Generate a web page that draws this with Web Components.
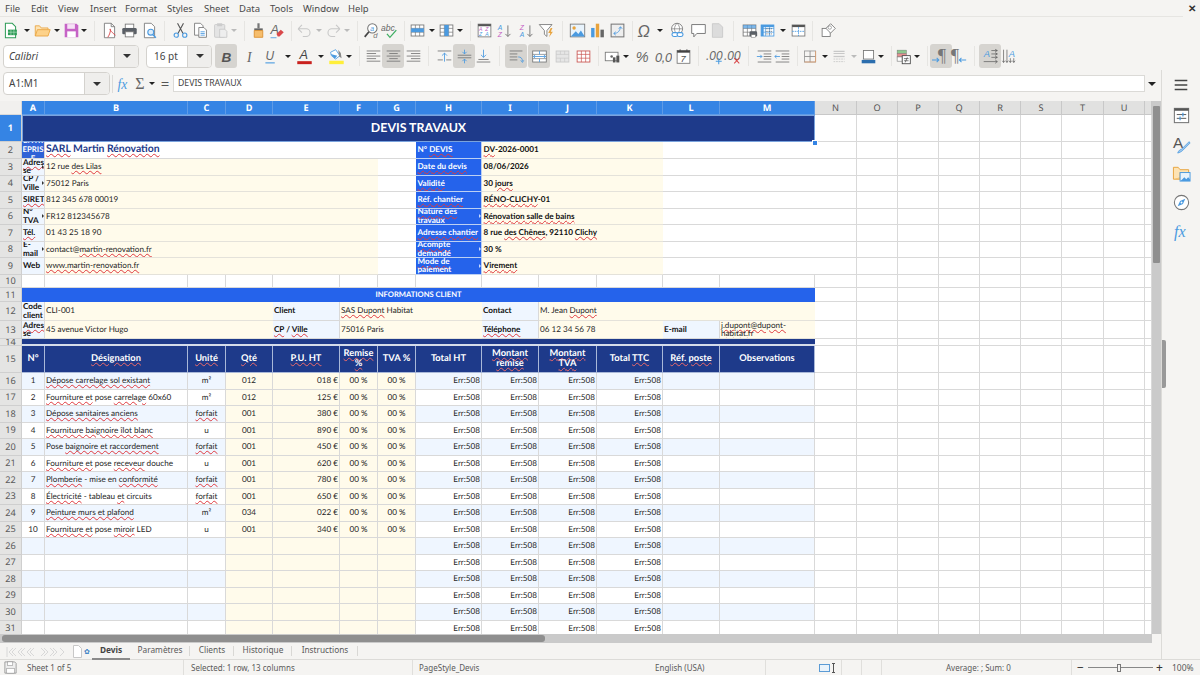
<!DOCTYPE html>
<html lang="fr">
<head>
<meta charset="utf-8">
<title>Devis</title>
<style>
  html, body { margin: 0; padding: 0; height: 100%; overflow: hidden; background: #f5f4f2; }
</style>
</head>
<body>
<lo-app>
  <lo-menubar></lo-menubar>
  <lo-toolbar height="27" start="1" items="new@12 dd@27 open@42 dd@57 save@71 dd@86 sep@93 pdf@107 print@129 preview@152 sep@164 cut@178 copy@200 paste@222 ddoff@236 sep@243 clone@256 clear@279 sep@292 undo@304 ddoff@319 redo@334 ddoff@348 sep@357 find@369 spell@391 sep@405 rowtbl@417 dd@432 coltbl@447 dd@461 sep@469 sort@482 sortasc@504 sortdesc@526 filter@548 sep@562 image@576 chart@597 pivot@619 sep@633 omega@645 dd@660 link@676 comment@698 headers@720 sep@733 printarea@747 freeze@769 dd@783 split@798 sep@813 shapes@826"></lo-toolbar>
  <lo-toolbar height="26" start="212" items="bold@229!  italic@251 under@272 dd@286 fcolor@306 dd@321 bgcolor@336 dd@351 sep@358 aleft@371 acenter@393! aright@415 sep@429 vtop@442 vcenter@464! vbottom@486 sep@499 wrap@513! merge@540! merge2@563 unmerge@585 sep@599 currency@612 dd@626 percent@641 number@664 date@685 sep@699 adddec@712 deldec@735 sep@749 indent@762 outdent@784 sep@798 borders@809 dd@825 bstyle@839 ddoff@854 bcolor@868 dd@883 sep@890 cond@903 dd@918 sep@927 ltr@938! rtl@960 sep@975 horiz@988! vert@1009">
    <lo-combo width="136" btn="23" italic>Calibri</lo-combo>
    <lo-combo width="66" btn="23" gap="7">16 pt</lo-combo>
  </lo-toolbar>
  <lo-formulabar></lo-formulabar>
  <lo-workspace>
    <lo-sheet></lo-sheet>
    <lo-sidebar></lo-sidebar>
  </lo-workspace>
  <lo-statusbar></lo-statusbar>
</lo-app>

<script>
const GR = '#757575', BL = '#4a9ae0', LG = '#c8c8c8', OR = '#e8a33d', RD = '#d9484a';
const lines = (ys, x1, x2, c = GR) => ys.map(y => `<path d="M${x1} ${y}H${x2}" stroke="${c}" stroke-width="1"/>`).join('');
const tbl = (c = GR) => `<rect x="2.500" y="3.500" width="15" height="13" fill="#fff" stroke="${c}"/><path d="M2.500 7.500h15M2.500 12h15M7.500 3.500v13M12.500 3.500v13" stroke="${c}" stroke-width=".8" fill="none"/>`;
const t = (x, y, s, txt, c = GR, extra = '') => `<text x="${x}" y="${y}" font-size="${s}" fill="${c}" font-family="Liberation Sans, sans-serif" ${extra}>${txt}</text>`;
const ICONS = {
  new: `<path d="M4 1.500h8l4 4v13H4z" fill="#fff" stroke="#2e9c57" stroke-width="1.200"/><rect x="7" y="9" width="10.500" height="6.500" fill="#2e9c57"/><path d="M10.500 9v6.500M14 9v6.500M7 12h10.500" stroke="#bfe6cc" stroke-width=".7"/>`,
  open: `<path d="M1.500 16.500V4.500h5l2 2.500h8v2" fill="#fde3b4" stroke="${OR}"/><path d="M1.500 16.500l2.500-7.500h15l-2.500 7.500z" fill="#fdd28a" stroke="${OR}"/>`,
  save: `<path d="M2 2h14l2 2v14H2z" fill="#c663c6"/><rect x="5" y="2.500" width="9" height="5.500" fill="#f6e2f6"/><rect x="5" y="11" width="10" height="7" fill="#fff"/>`,
  pdf: `<path d="M4 1.500h8l4 4v13H4z" fill="#fff" stroke="${GR}"/><path d="M12 1.500v4h4" fill="none" stroke="${GR}"/><path d="M8 18c2-3 3.500-7 3-9.500-.7-1.500-1.500 1.500 6 7" fill="none" stroke="${RD}" stroke-width="1.100"/>`,
  print: `<rect x="5" y="2.500" width="10" height="5" fill="#fff" stroke="${GR}"/><rect x="1.500" y="7" width="17" height="7.500" rx="1.500" fill="#5a5f66"/><rect x="5" y="11.500" width="10" height="6" fill="#fff" stroke="${GR}"/>`,
  preview: `<path d="M4 1.500h8l4 4v13H4z" fill="#fff" stroke="${GR}"/><circle cx="11.500" cy="12" r="3.500" fill="#dcecfa" stroke="${BL}" stroke-width="1.300"/><path d="M14 15l3.500 3.500" stroke="${BL}" stroke-width="1.600"/>`,
  cut: `<path d="M6.500 1.500l6.500 12M13.500 1.500L7 13.500" stroke="#555" stroke-width="1.300"/><circle cx="5" cy="15.500" r="2.500" fill="none" stroke="${BL}" stroke-width="1.300"/><circle cx="15" cy="15.500" r="2.500" fill="none" stroke="${BL}" stroke-width="1.300"/>`,
  copy: `<path d="M3 1.500h7l3 3v11H3z" fill="#fff" stroke="${GR}"/><path d="M8 6.500h6l3 3v8.500H8z" fill="#fff" stroke="${GR}"/>${lines([11.500, 13.500, 15.500], 10, 15, BL)}`,
  paste: `<rect x="3" y="3" width="12" height="15" rx="1" fill="#e4e4e4" stroke="${LG}"/><rect x="6" y="1.500" width="6" height="3.500" fill="#ccc"/><path d="M9 8.500h6l2.500 2.500v7H9z" fill="#eee" stroke="${LG}"/>`,
  clone: `<rect x="8.700" y="1.500" width="2.600" height="6" fill="#777"/><rect x="5" y="7.500" width="10" height="2.500" fill="#666"/><path d="M5 10h10v8H5z" fill="#f6bd6c" stroke="#d98c2c"/>`,
  clear: `${t(3, 14, 15, 'A', '#666')}<path d="M10 14l5-5 3.500 3-5 5h-2z" fill="${RD}"/><path d="M3 18.500h7" stroke="${BL}"/>`,
  undo: `<path d="M2.500 8H12a4.500 4.500 0 0 1 0 9H8M2.500 8L7 3.500M2.500 8L7 12.500" fill="none" stroke="${LG}" stroke-width="1.300"/>`,
  redo: `<path d="M17.500 8H8a4.500 4.500 0 0 0 0 9h4M17.500 8L13 3.500M17.500 8L13 12.500" fill="none" stroke="${LG}" stroke-width="1.300"/>`,
  find: `<circle cx="11" cy="7.500" r="5.500" fill="#fff" stroke="${GR}" stroke-width="1.200"/><path d="M7 11.500l-5 6" stroke="#444" stroke-width="2"/>${t(8.500, 10.500, 8, 'a', BL)}${t(12, 19, 9, 'd', GR)}`,
  spell: `${t(0, 10, 10, 'abc', '#666')}<path d="M7 14l3.500 4L18 9.500" fill="none" stroke="#3fae62" stroke-width="1.500"/>`,
  rowtbl: `${tbl()}<rect x="2.500" y="7.500" width="15" height="4.500" fill="${BL}"/>`,
  coltbl: `${tbl()}<rect x="7.500" y="3.500" width="5" height="13" fill="${BL}"/>`,
  sort: `<rect x="2.500" y="2.500" width="15" height="15" fill="#fff" stroke="${GR}"/><rect x="2.500" y="2.500" width="15" height="2.500" fill="#555"/>${t(3.500, 10.500, 6, 'A', '#c45cc4')}${t(3.500, 16.500, 6, 'Z', BL)}${t(11, 10.500, 6, 'Z', '#c45cc4')}${t(11, 16.500, 6, 'A', BL)}`,
  sortasc: `${t(2, 9, 8, 'A', BL)}${t(2, 18, 8, 'Z', '#c45cc4')}<path d="M14 4v13M11 14l3 3 3-3" fill="none" stroke="${GR}" stroke-width="1.100"/>`,
  sortdesc: `${t(2, 9, 8, 'Z', '#c45cc4')}${t(2, 18, 8, 'A', BL)}<path d="M14 4v13M11 14l3 3 3-3" fill="none" stroke="${GR}" stroke-width="1.100"/>`,
  filter: `<path d="M1.500 3h15l-6 7v7l-3-2.500V10z" fill="#fff" stroke="${GR}"/><path d="M15 7l-3 6h2.500l-1.500 5 4.500-6.500H15l2-4.500z" fill="${OR}"/>`,
  image: `<rect x="1.500" y="2.500" width="17" height="15" fill="#e8f3fc" stroke="${GR}"/><circle cx="6" cy="7" r="2" fill="${OR}"/><path d="M2 17l6-6 3 3 3-4 4.500 7z" fill="${BL}"/>`,
  chart: `<rect x="2.500" y="7" width="4" height="11" fill="${BL}"/><rect x="8" y="2" width="4" height="16" fill="${OR}"/><rect x="13.500" y="9" width="4" height="9" fill="#666"/>`,
  pivot: `<rect x="2.500" y="2.500" width="15" height="15" fill="#eee" stroke="${GR}" stroke-width="1.200"/><path d="M6 13.500c4 0 7-3 7.500-7.500M11.500 8l2-2.500L15.500 8M8 11.500L5.500 13.500 8 15.500" fill="none" stroke="${BL}"/>`,
  omega: t(0.500, 17.500, 19, 'Ω', '#666'),
  link: `<circle cx="9.500" cy="8" r="6.500" fill="#fff" stroke="${GR}"/><path d="M3 8h13M9.500 1.500c-4 4-4 9 0 13M9.500 1.500c4 4 4 9 0 13" fill="none" stroke="${GR}" stroke-width=".8"/><rect x="3.500" y="12.500" width="7" height="4.500" rx="2.200" fill="#fff" stroke="${BL}" stroke-width="1.300"/><rect x="9.500" y="12.500" width="7" height="4.500" rx="2.200" fill="#fff" stroke="${BL}" stroke-width="1.300"/>`,
  comment: `<path d="M2 3h16v10.500H8L4.500 17.500v-4H2z" fill="#fff" stroke="${GR}" stroke-width="1.100"/>`,
  headers: `<path d="M4 2h8l4 4v12H4z" fill="#dcdcdc" stroke="${LG}"/>`,
  printarea: `${tbl()}<rect x="2.500" y="3.500" width="15" height="4" fill="${BL}" opacity=".7"/><rect x="10" y="11" width="9" height="6" rx="1.500" fill="#5a5f66"/><rect x="12" y="15" width="5" height="3.500" fill="#fff" stroke="${GR}" stroke-width=".6"/>`,
  freeze: `${tbl(BL)}<rect x="2.500" y="3.500" width="15" height="2.500" fill="${BL}"/><rect x="2.500" y="3.500" width="3" height="13" fill="${BL}"/><path d="M8 8h7M8 11h7M8 14h7" stroke="#333" stroke-width=".8" stroke-dasharray="1 1"/>`,
  split: `<rect x="2.500" y="3.500" width="15" height="13" fill="#fff" stroke="${GR}"/><rect x="2.500" y="3.500" width="15" height="2.500" fill="#555"/><path d="M2.500 11h15M10 6v10.500" stroke="${BL}" stroke-dasharray="2 1"/>`,
  shapes: `<rect x="2.500" y="7.500" width="9.500" height="9.500" fill="#fff" stroke="${GR}"/><path d="M12.500 2l5.500 5.500-5.500 5.500L7 7.500z" fill="#fff" stroke="${GR}"/><circle cx="11.500" cy="6.500" r="2" fill="none" stroke="${GR}" stroke-width=".7"/>`,
  bold: t(4, 16, 16, 'B', '#555', 'font-weight="700"'),
  italic: `<text x="6" y="16" font-size="16" fill="#666" font-family="Liberation Serif, serif" font-style="italic">I</text>`,
  under: `${t(4, 14, 14, 'U', '#666')}<path d="M4 17.500h11" stroke="${BL}" stroke-width="1.300"/>`,
  fcolor: `${t(4, 13.500, 15, 'A', '#444')}<rect x="1.500" y="15.500" width="17" height="3.500" fill="#c9211e"/>`,
  bgcolor: `<path d="M3 5l6-3 5 7-5 4-5-4z" fill="#fff" stroke="${BL}"/><path d="M3 7l8 2-3 3.500z" fill="${BL}"/><path d="M12 2l3 4 1 6-3-2z" fill="#888"/><rect x="1.500" y="15" width="17" height="4" fill="#ffef3a"/>`,
  aleft: lines([3.500, 9.500, 15.500], 2, 18) + lines([6.500, 12.500], 2, 13),
  acenter: lines([3.500, 9.500, 15.500], 2, 18) + lines([6.500, 12.500], 5, 15),
  aright: lines([3.500, 9.500, 15.500], 2, 18) + lines([6.500, 12.500], 7, 18),
  vtop: `${lines([3.500], 2, 18)}<path d="M10 16V6M7 9l3-3 3 3" fill="none" stroke="${BL}"/>${lines([14], 2, 8)}${lines([14], 12, 18)}`,
  vcenter: `${lines([8.500, 11.500], 2, 18)}<path d="M10 2v5M7.500 4.500L10 7l2.500-2.500M10 18v-5M7.500 15.500L10 13l2.500 2.500" fill="none" stroke="${BL}"/>`,
  vbottom: `<path d="M10 2v9M7 8l3 3 3-3" fill="none" stroke="${BL}"/>${lines([13.500], 4, 16)}${lines([16.500], 2, 18)}`,
  wrap: `${lines([3.500], 2, 17)}${lines([7, 10.500, 14], 2, 11)}<path d="M12 10.500c3 0 5 1.500 5 5M15 14.500l2 2.500 1.500-2.500" fill="none" stroke="${BL}"/>`,
  merge: `<rect x="2" y="3.500" width="16" height="13" fill="#fff" stroke="${GR}"/><path d="M2 7.500h16M2 12.500h16" stroke="${GR}" stroke-width=".8"/><path d="M2.500 10h15M5 8l-2 2 2 2M15 8l2 2-2 2" fill="none" stroke="${BL}"/><path d="M10 3.500v4M10 12.500v4" stroke="${BL}"/>`,
  merge2: `<rect x="2.500" y="3.500" width="15" height="13" fill="#e6e6e6" stroke="${LG}"/><path d="M2.500 7.500h15M2.500 12h15M7.500 3.500v4M12.500 3.500v4M7.500 12v4.500M12.500 12v4.500" stroke="${LG}" stroke-width=".8"/>`,
  unmerge: tbl('#c9534f'),
  currency: `<rect x="1.500" y="5" width="15" height="10" fill="#fff" stroke="${GR}"/><circle cx="9" cy="10" r="1.500" fill="#666"/><rect x="10.500" y="11" width="3" height="6" fill="#555"/><rect x="14.500" y="9" width="3.500" height="8" fill="#555"/>`,
  percent: t(1, 16, 17, '%', '#666'),
  number: t(0, 16, 15, '0,0', '#666', 'textLength="20"'),
  date: `<rect x="2.500" y="3" width="15" height="15" fill="#fff" stroke="${GR}"/><rect x="2.500" y="3" width="15" height="2.500" fill="#444"/><path d="M6 1.500v3M14 1.500v3" stroke="#444"/>${t(6.500, 16, 11, '7', '#555')}`,
  adddec: `${t(0, 14, 14, '.00', '#666')}<path d="M15 12v7M11.500 15.500h7" stroke="${BL}" stroke-width="1.200"/>`,
  deldec: `${t(0, 14, 14, '.00', '#666')}<path d="M12 12l6 6M18 12l-6 6" stroke="${RD}" stroke-width="1.200"/>`,
  indent: `${lines([3.500, 16.500], 2, 18)}${lines([7, 10, 13], 9, 18)}<path d="M1 10h6M5 8l2 2-2 2" fill="none" stroke="${BL}"/>`,
  outdent: `${lines([3.500, 16.500], 2, 18)}${lines([7, 10, 13], 9, 18)}<path d="M7 10H1M3 8l-2 2 2 2" fill="none" stroke="${BL}"/>`,
  borders: `<rect x="3" y="3.500" width="13" height="13" fill="none" stroke="#999"/><path d="M9.500 3.500v13M3 10h13" stroke="#8a8a8a"/><path d="M3 16.500h13M16 3.500v13" stroke="#e0a070"/>`,
  bstyle: `<path d="M3 4h13M3 6.500h13" stroke="${LG}" stroke-width="1.300"/><path d="M3 10h13" stroke="${LG}" stroke-width="1.500"/><path d="M3 13h13M3 16h13" stroke="${LG}" stroke-dasharray="2 1"/>`,
  bcolor: `<rect x="4" y="3" width="12" height="10" fill="#fff" stroke="${GR}"/><path d="M2 14h16v4H2z" fill="#2c6eae"/>`,
  cond: `<rect x="2.500" y="2.500" width="11" height="4" fill="#8fc98f" stroke="${GR}" stroke-width=".5"/><rect x="2.500" y="6.500" width="11" height="4" fill="#e58f8f" stroke="${GR}" stroke-width=".5"/><rect x="2.500" y="10.500" width="6" height="5" fill="#fff" stroke="${GR}" stroke-width=".7"/><rect x="8.500" y="9" width="9.500" height="9.500" fill="#fff" stroke="#444"/><path d="M10.500 12.500h5.500M10.500 15h5.500M14.500 11l-2.500 6" stroke="#444" stroke-width=".8"/>`,
  ltr: `<text x="6" y="16" font-size="21" fill="#777" font-family="Liberation Serif, serif">¶</text><path d="M0 14h8M5.500 11.500L8 14l-2.500 2.500" fill="none" stroke="${BL}" stroke-width="1.200"/>`,
  rtl: `<text x="0" y="16" font-size="21" fill="#777" font-family="Liberation Serif, serif">¶</text><path d="M19 14h-8M13.500 11.500L11 14l2.500 2.500" fill="none" stroke="${BL}" stroke-width="1.200"/>`,
  horiz: `${t(2, 10.500, 11, 'A', BL)}<path d="M11 3h7M11 7h7M11 11h7M2 16h16M15.500 1.500L18 3l-2.500 1.500M15.500 5.500L18 7l-2.500 1.500M15.500 9.500L18 11l-2.500 1.500M15.500 14L18 16l-2.500 2" fill="none" stroke="#555" stroke-width=".8"/>`,
  vert: `${t(9, 10.500, 11, 'A', BL)}<path d="M3 2v15M7 2v15M11 12v5M15 12v5M1.500 15l1.500 2 1.500-2M5.500 15L7 17l1.500-2M9.500 15l1.500 2 1.500-2M13.500 15l1.500 2 1.500-2" fill="none" stroke="#555" stroke-width=".8"/>`,
  burger: `<path d="M3 5h14M3 10h14M3 15h14" stroke="#444" stroke-width="1.700"/>`,
  props: `<rect x="2.500" y="2.500" width="15" height="15" fill="#fff" stroke="${GR}" stroke-width="1.100"/><rect x="2.500" y="2.500" width="15" height="2.500" fill="#555"/><path d="M5 9h10M5 13h10" stroke="#555"/><path d="M11.500 7v4M8.500 11v4" stroke="${BL}" stroke-width="1.300"/>`,
  styles: `${t(1, 13.500, 16, 'A', '#555')}<path d="M6 19c1-3 3-4 4-4l8-8 1 1.500-8 8c-1 1-3 2-5 2.500z" fill="#9cc6ec" stroke="${BL}" stroke-width=".8"/>`,
  gallery: `<path d="M1.500 16V3.500h5l2 2.500h9v3" fill="#fde3b4" stroke="${OR}"/><path d="M1.500 16h7V9h10" fill="#fdd28a" stroke="${OR}"/><rect x="8.500" y="9" width="10.500" height="9" fill="#e8f3fc" stroke="${BL}"/><path d="M9 18l4-4 2 2 2-2 2 2v2z" fill="${BL}"/>`,
  nav: `<circle cx="10" cy="10" r="7.500" fill="#fff" stroke="${GR}" stroke-width="1.100"/><path d="M14 6l-2.500 5.500L6 14l2.500-5.500z" fill="${BL}"/><circle cx="10" cy="10" r="1" fill="#fff"/>`,
  fx: `<text x="2" y="16" font-size="17" fill="${BL}" font-family="Liberation Serif, serif" font-style="italic">fx</text>`,
  saveoff: `<path d="M2.500 2.500h13l2 2v13h-15z" fill="#eee" stroke="#888"/><rect x="6" y="2.500" width="7" height="5" fill="#fff" stroke="#888" stroke-width=".7"/><rect x="5" y="11" width="10" height="6.500" fill="#fff" stroke="#888" stroke-width=".7"/>`
};

class LoIcon extends HTMLElement {
  connectedCallback() {
    const size = this.getAttribute('size') || 17;
    this.attachShadow({ mode: 'open' }).innerHTML = `
      <style>:host{display:inline-flex;align-items:center;justify-content:center} svg{display:block}</style>
      <svg width="${size}" height="${size}" viewBox="0 0 20 20">${ICONS[this.getAttribute('name')] || ''}</svg>`;
  }
}

class LoApp extends HTMLElement {
  constructor() {
    super();
    this.attachShadow({ mode: 'open' }).innerHTML = `
      <style>:host{display:flex;flex-direction:column;width:1200px;height:675px;overflow:hidden;background:#f5f4f2;font-family:"Noto Sans",sans-serif;color:#444}</style>
      <slot></slot>`;
  }
}

class LoMenubar extends HTMLElement {
  constructor() {
    super();
    const items = [['File',5],['Edit',31],['View',58],['Insert',90],['Format',125],['Styles',167],['Sheet',204],['Data',239],['Tools',270],['Window',303],['Help',348]];
    this.attachShadow({ mode: 'open' }).innerHTML = `
      <style>
        :host{display:flex;height:16px;flex:none;padding-left:5px;align-items:center;font-size:9.500px;color:#4a4a4a;position:relative;border-bottom:1px solid #e6e5e2;margin-right:17px}
        span{white-space:nowrap}
        .x{position:absolute;right:-13px;top:0;line-height:16px;font-weight:700;font-size:10px;color:#333}
      </style>
      ${items.map((m,i)=>{const next=items[i+1];return `<span style="width:${next?next[1]-m[1]:30}px">${m[0]}</span>`}).join('')}<span class="x">✕</span>`;
  }
}

class LoToolbar extends HTMLElement {
  connectedCallback() {
    const parsed = this.getAttribute('items').trim().split(/\s+/).map(s => {
      const on = s.endsWith('!');
      const [name, c] = s.replace('!', '').split('@');
      return { name, c: +c, on };
    });
    let edge = +this.getAttribute('start');
    const html = parsed.map((it, i) => {
      const next = parsed[i + 1];
      const right = next ? (it.c + next.c) / 2 : it.c + 12;
      const w = right - edge;
      edge = right;
      if (it.name === 'sep') return `<i class="cell" style="width:${w}px"><b class="sep"></b></i>`;
      if (it.name === 'dd' || it.name === 'ddoff') return `<i class="cell" style="width:${w}px"><b class="tri ${it.name === 'ddoff' ? 'off' : ''}"></b></i>`;
      return `<i class="cell" style="width:${w}px"><span class="btn ${it.on ? 'on' : ''}"><lo-icon name="${it.name}"></lo-icon></span></i>`;
    }).join('');
    const lead = this.querySelector('lo-combo');
    this.attachShadow({ mode: 'open' }).innerHTML = `
      <style>
        :host{display:flex;flex:none;height:${this.getAttribute('height')}px;align-items:center;padding-left:${lead ? 3 : 1}px;${lead ? 'margin-top:-1px;padding-bottom:1px;' : ''}}
        .lead{display:flex;gap:7px;flex:none;${lead ? 'width:209px;' : ''}}
        .cell{display:flex;flex:none;align-items:center;justify-content:center;height:100%}
        .btn{display:flex;align-items:center;justify-content:center;flex:none;width:22px;height:24px;border-radius:3px}
        .btn.on{background:#d6d4d0}
        .sep{display:block;width:1px;height:20px;background:#e6e5e2}
        .tri{display:block;width:0;height:0;border:3px solid transparent;border-top:3.500px solid #222;border-bottom:0}
        .tri.off{border-top-color:#bbb}
      </style>
      <div class="lead"><slot></slot></div>${html}`;
  }
}

class LoCombo extends HTMLElement {
  connectedCallback() {
    const w = this.getAttribute('width'), b = this.getAttribute('btn'), gap = this.getAttribute('gap') || 5;
    this.attachShadow({ mode: 'open' }).innerHTML = `
      <style>
        :host{display:flex;flex:none;width:${w}px;height:23px;box-sizing:border-box;border:1px solid #d4d2ce;border-radius:4px;background:#fff;overflow:hidden;font-size:10px;color:#444}
        .v{flex:1;padding-left:${gap}px;line-height:21px;font-style:${this.hasAttribute('italic') ? 'italic' : 'normal'};white-space:nowrap}
        .b{flex:none;width:${b}px;background:#efeeec;border-left:1px solid #d4d2ce;display:flex;align-items:center;justify-content:center}
        .tri{width:0;height:0;border:4px solid transparent;border-top:4px solid #333;border-bottom:0}
      </style>
      <div class="v"><slot></slot></div><div class="b"><div class="tri"></div></div>`;
  }
}

class LoFormulabar extends HTMLElement {
  constructor() {
    super();
    this.attachShadow({ mode: 'open' }).innerHTML = `
      <style>
        :host{display:flex;flex:none;height:30px;align-items:center;padding:0 0 3px 3px;box-sizing:border-box}
        lo-combo{margin-right:2px}
        .sep{width:1px;height:18px;background:#dcdbd8;margin-right:2px}
        .ic{display:flex;align-items:center;justify-content:center;flex:none}
        .tri{width:0;height:0;border:3px solid transparent;border-top:3.500px solid #222;border-bottom:0;margin:0 4px 0 2px}
        .eq{font-size:15px;color:#555;width:12px;text-align:center;margin-right:2px;line-height:1}
        .input{flex:none;width:972px;height:17px;box-sizing:border-box;background:#fff;border:1px solid #dbdad7;padding-left:4px;font-size:8.700px;line-height:15px;color:#444;white-space:nowrap}
        .end{width:0;height:0;border:4px solid transparent;border-top:4px solid #222;border-bottom:0;margin-left:3px}
      </style>
      <lo-combo width="107" btn="24">A1:M1</lo-combo>
      <span class="sep"></span>
      <span class="ic" style="width:16px;margin-left:1px"><lo-icon name="fx" size="16"></lo-icon></span>
      <span class="ic" style="font:16px 'Liberation Serif',serif;color:#666;width:14px;margin-left:1px">Σ</span>
      <span class="tri"></span><span class="eq">=</span>
      <div class="input">DEVIS TRAVAUX</div><span class="end"></span>`;
  }
}

class LoWorkspace extends HTMLElement {
  constructor() {
    super();
    this.attachShadow({ mode: 'open' }).innerHTML = `
      <style>:host{display:flex;flex:1;min-height:0}</style><slot></slot>`;
  }
}

// feuille : colonnes A..V, lignes 1..31
const COLS = [22,23,143,38,47,67,38,38,66,57,58,66,57,95,42,41,41,41,41,41,42,41,7];
const ROWS = [14,27,17,16.5,16.5,16.5,16.5,16.5,16.5,16.5,13.5,14,19,18,7,27,...Array(16).fill(16.5)];
const sp = s => s.replace(/~([^~]+)~/g, '<u>$1</u>');

class LoSheet extends HTMLElement {
  constructor() {
    super();
    const cells = [];
    const used = {};
    const put = (r, c, span, txt, cls) => {
      for (let i = 0; i < span; i++) used[r + ':' + (c + i)] = 1;
      cells.push(`<div class="c ${cls}" style="grid-area:${r + 1}/${c + 1}/span 1/span ${span}"><span>${sp(txt)}</span></div>`);
    };
    'ABCDEFGHIJKLMNOPQRSTU'.split('').forEach((l, i) => put(0, i + 1, 1, l, 'ch ' + (i < 13 ? 'sel' : '')));
    put(0, 22, 1, '', 'ch');
    put(0, 0, 1, '', 'corner');
    for (let r = 1; r <= 31; r++) put(r, 0, 1, String(r), 'rh ' + (r === 1 ? 'sel' : ''));

    put(1, 1, 13, 'DEVIS TRAVAUX', 'title');
    put(2, 1, 1, 'ENTR<br>EPRIS<br>E', 'ent');
    put(2, 2, 6, '~SARL~ Martin ~Rénovation~', 'co');
    const left = [['~Adres<br>se~','12 rue ~des Lilas~',1],['CP /<br>~Ville~','75012 Paris',1],['~SIRET~','812 345 678 00019',0],['N°<br>TVA','FR12 812345678',1],['~Tél.~','01 43 25 18 90',0],['E-<br>mail','contact@~martin-renovation.fr~',1],['Web','~www.martin-renovation.fr~',0]];
    left.forEach((l, i) => {
      put(3 + i, 1, 1, l[0], 'lbl tight ' + (l[2] ? 'clip' : ''));
      put(3 + i, 2, 5, l[1], 'y');
      put(3 + i, 7, 1, '', 'plain');
    });
    const right = [['N° ~DEVIS~','~DV~-2026-0001',0],['~Date du devis~','08/06/2026',0],['~Validité~','30 ~jours~',0],['~Réf. chantier~','~RÉNO-CLICHY~-01',0],['~Nature des<br>travaux~','~Rénovation salle de bains~',1],['~Adresse chantier~','8 rue ~des Chênes~, 92110 ~Clichy~',0],['~Acompte<br>demandé~','30 %',1],['~Mode de<br>paiement~','~Virement~',1]];
    right.forEach((l, i) => {
      put(2 + i, 8, 1, l[0], 'hdr tight ' + (l[2] ? 'clipw' : ''));
      put(2 + i, 9, 3, l[1], 'y b');
      put(2 + i, 12, 2, '', 'plain');
    });
    put(11, 1, 13, 'INFORMATIONS CLIENT', 'band');
    put(12, 1, 1, 'Code<br>client', 'lbl tight');
    put(12, 2, 3, 'CLI-001', 'y');
    put(12, 5, 1, 'Client', 'lbl');
    put(12, 6, 3, '~SAS Dupont~ Habitat', 'y');
    put(12, 9, 1, 'Contact', 'lbl');
    put(12, 10, 4, 'M. Jean ~Dupont~', 'y');
    put(13, 1, 1, '~Adres<br>se~', 'lbl tight');
    put(13, 2, 3, '45 avenue Victor Hugo', 'y');
    put(13, 5, 1, '~CP~ / ~Ville~', 'lbl');
    put(13, 6, 3, '75016 Paris', 'y');
    put(13, 9, 1, '~Téléphone~', 'lbl');
    put(13, 10, 2, '06 12 34 56 78', 'y');
    put(13, 12, 1, 'E-mail', 'lbl');
    put(13, 13, 1, '~j.dupont@dupont-<br>habitat.fr~', 'y tight');
    put(14, 1, 13, '', 'rule');
    ['N°','~Désignation~','~Unité~','~Qté~','~P.U. HT~','~Remise<br>%~','TVA %','Total HT','~Montant<br>remise~','~Montant<br>TVA~','Total ~TTC~','~Réf. poste~','Observations']
      .forEach((h, i) => put(15, i + 1, 1, h, 'th'));
    const lines = [
      ['~Dépose carrelage sol existant~','m²','012','018'],
      ['~Fourniture et~ pose ~carrelage~ 60x60','m²','012','125'],
      ['~Dépose sanitaires anciens~','~forfait~','001','380'],
      ['~Fourniture baignoire îlot blanc~','u','001','890'],
      ['Pose ~baignoire et raccordement~','~forfait~','001','450'],
      ['~Fourniture et~ pose ~receveur~ douche','u','001','620'],
      ['~Plomberie~ - mise en ~conformité~','~forfait~','001','780'],
      ['~Électricité~ - tableau ~et~ circuits','~forfait~','001','650'],
      ['~Peinture murs et plafond~','m²','034','022'],
      ['~Fourniture et~ pose ~miroir~ LED','u','001','340']
    ];
    for (let r = 16; r <= 31; r++) {
      const st = r % 2 === 0 ? 'st' : 'wh';
      const d = lines[r - 16];
      put(r, 1, 1, d ? String(r - 15) : '', st + ' ctr');
      put(r, 2, 1, d ? d[0] : '', st);
      put(r, 3, 1, d ? d[1] : '', st + ' ctr');
      put(r, 4, 1, d ? d[2] : '', 'y2 ctr');
      put(r, 5, 1, d ? d[3] + ' €' : '', 'y2 rgt');
      put(r, 6, 1, d ? '00 %' : '', 'y2 ctr');
      put(r, 7, 1, d ? '00 %' : '', 'y2 ctr');
      for (let c = 8; c <= 11; c++) put(r, c, 1, 'Err:508', st + ' rgt err');
      put(r, 12, 1, '', st);
      put(r, 13, 1, '', st);
    }
    for (let r = 1; r <= 31; r++) for (let c = 1; c <= 22; c++) if (!used[r + ':' + c]) put(r, c, 1, '', '');

    this.attachShadow({ mode: 'open' }).innerHTML = `
      <style>
        :host{display:grid;grid-template-columns:1152px 9px;grid-template-rows:533px 9px 17px;flex:none;width:1161px;margin-top:1px}
        .view{overflow:hidden;background:#fff;position:relative}
        .grid{display:grid;grid-template-columns:${COLS.map(x => x + 'px').join(' ')};grid-template-rows:${ROWS.map(x => x + 'px').join(' ')};font:8.150px/1 Lato,"Liberation Sans",sans-serif;color:#262626;text-rendering:geometricPrecision}
        .c{box-sizing:border-box;border-right:1px solid #d9d9d9;border-bottom:1px solid #d9d9d9;display:flex;align-items:center;overflow:hidden;padding:0 1px 1px;white-space:nowrap;position:relative;min-width:0}
        u{text-decoration:underline wavy #df3a3f 1px;text-underline-offset:1px}
        .ch{justify-content:center;background:#e1e1e0;color:#555;font:9.200px "Noto Sans",sans-serif;border-color:#c8c8c8}
        .ch.sel{background:#3584e4;color:#fff;font-weight:700;border-color:#5e9be6}
        .corner{background:#f1f0ee}
        .rh{justify-content:center;background:#e4e4e3;color:#5a5a5a;font:9.200px "Noto Sans",sans-serif;border-color:#cfcfcf}
        .rh.sel{background:#3584e4;color:#fff;font-weight:700}
        .title{justify-content:center;background:#1e3a8a;color:#fff;font-weight:700;font-size:12.400px;box-shadow:inset 0 0 0 1px #7aa3dd;border:0}
        .ent{justify-content:center;text-align:center;background:#2f62d6;color:#fff;font-weight:700;font-size:7.800px;line-height:9px}
        .co{color:#1e3a8a;font-weight:700;font-size:10.400px;padding-left:1px;background:#fff;border-right:0}
        .lbl{background:#eff6ff;color:#111;font-weight:700}
        .tight{line-height:8.500px}
        .y{background:#fffbeb;padding-left:1px;border-right:0;border-bottom-color:#e4e2da}
        .y.b{font-weight:700;color:#111;padding-left:1.500px}
        .plain{border-right:0}
        .hdr{background:#2563eb;color:#fff;font-weight:700;padding-left:1.500px;border-color:#bcd0f3}
        .clip::after,.clipw::after{content:"";position:absolute;right:0;top:50%;margin-top:-2px;border:2px solid transparent;border-left:2.500px solid #333;border-right:0}
        .clipw::after{border-left-color:#c9dcff}
        .band{justify-content:center;background:#2563eb;color:#fff;font-weight:700;font-size:7.600px;border:0}
        .rule{background:linear-gradient(#1e3a8a 0 5px,#d5dcea 5px);border:0}
        .th{justify-content:center;text-align:center;background:#1e3a8a;color:#fff;font-weight:700;font-size:9.300px;line-height:10.500px;border-color:#a9b8d8;padding-bottom:2px}
        .th u{text-decoration-color:#ef6a6a}
        .st{background:#eff6ff}
        .wh{background:#fff}
        .y2{background:#fffbeb}
        .ctr{justify-content:center}
        .rgt{justify-content:flex-end}
        .handle{position:absolute;left:812.500px;top:39.500px;width:4px;height:4px;background:#3584e4;outline:1px solid #fff}
        .vtrack{background:#cacaca;padding:5px 1px 0;box-sizing:border-box}
        .vtrack i{display:block;height:157px;background:#8f8f8f;border-radius:1px}
        .hs{background:#cacaca;padding:1px 0 0 2px;box-sizing:border-box;height:9px}
        .hs i{display:block;width:543px;height:7px;background:#8f8f8f;border-radius:3px}
        .corner2{background:#f5f4f2}
        .tabs{grid-column:1/3}
      </style>
      <div class="view"><div class="grid">${cells.join('')}</div><div class="handle"></div></div>
      <div class="vtrack"><i></i></div>
      <div class="hs"><i></i></div><div class="corner2"></div>
      <lo-tabbar class="tabs"></lo-tabbar>`;
  }
}

class LoTabbar extends HTMLElement {
  constructor() {
    super();
    const tabs = [['Devis',38,1],['Paramètres',60],['Clients',44],['Historique',58],['Instructions',66]];
    const chev = x => `<path d="M${x} 1l-4 4 4 4M${x + 3} 1l-4 4 4 4" />`;
    this.attachShadow({ mode: 'open' }).innerHTML = `
      <style>
        :host{display:flex;height:17px;align-items:center;font-size:8.300px;color:#5a5a5a;background:#f5f4f2;padding-left:6px}
        .nav{flex:none;width:59px;display:block}
        .add{flex:none;width:27px;display:flex;align-items:center;justify-content:flex-end;padding-right:2px;box-sizing:border-box;font-size:7px;color:#3a7fc4}
        .tab{flex:none;height:17px;line-height:14px;text-align:center;box-sizing:border-box;position:relative}
        .tab::after{content:"";position:absolute;right:0;top:3px;height:10px;width:1px;background:#d9d8d5}
        .tab.on{font-weight:700;color:#444;border-bottom:2px solid #8a8a8a}
        .tab.on::after{display:none}
      </style>
      <svg class="nav" width="59" height="10" viewBox="0 0 59 10" fill="none" stroke="#d8d8d8"><path d="M1 0v10"/>${chev(7)}${chev(16)}${chev(25)}<path d="M35 1l4 4-4 4M38 1l4 4-4 4M44 1l4 4-4 4M47 1l4 4-4 4M54 1l4 4-4 4"/></svg>
      <div class="add"><svg width="11" height="13" viewBox="0 0 11 13"><path d="M1.500 .5h5l3 3v9h-8z" fill="#fff" stroke="#c8c8c8"/></svg><span style="margin-left:1px">✿</span></div>
      ${tabs.map(t => `<div class="tab ${t[2] ? 'on' : ''}" style="width:${t[1]}px">${t[0]}</div>`).join('')}`;
  }
}

class LoSidebar extends HTMLElement {
  constructor() {
    super();
    const names = ['props', 'styles', 'gallery', 'nav', 'fx'];
    this.attachShadow({ mode: 'open' }).innerHTML = `
      <style>
        :host{display:flex;flex:none;width:39px;flex-direction:column;align-items:center;box-sizing:border-box;border-left:1px solid #dcdbd8;margin-top:-30px;height:589px;position:relative;padding-top:5px;gap:9px}
        .b{height:20px;display:flex;align-items:center}
        .first{margin-bottom:1px}
        .grip{position:absolute;left:0;top:270px;width:4px;height:48px;background:#999;border-radius:0 2px 2px 0}
      </style>
      <div class="b first"><lo-icon name="burger" size="18"></lo-icon></div>
      ${names.map(n => `<div class="b"><lo-icon name="${n}" size="19"></lo-icon></div>`).join('')}
      <div class="grip"></div>`;
  }
}

class LoStatusbar extends HTMLElement {
  constructor() {
    super();
    this.attachShadow({ mode: 'open' }).innerHTML = `
      <style>
        :host{display:grid;grid-template-columns:184px 229px 242px 1fr;flex:none;height:16px;box-sizing:border-box;border-top:1px solid #dcdbd8;font-size:8px;color:#5a5a5a;align-items:center;white-space:nowrap;background:#f5f4f2;margin-top:-1px}
        .f{display:flex;align-items:center;height:15px}
        .sep{border-right:1px solid #e0dfdc}
        .rest{display:grid;grid-template-columns:111px 76px 20px 20px 190px 101px 1fr}
        .rest > div{display:flex;align-items:center;height:15px;box-sizing:border-box}
        .ln{width:65px;height:1px;background:#888;margin:0 3px 0 4px;position:relative}
        .ln::after{content:"";position:absolute;left:29px;top:-3px;width:2px;height:6px;background:#f5f4f2;border:1px solid #777}
      </style>
      <div class="f sep" style="padding-left:3px;gap:9px"><lo-icon name="saveoff" size="15"></lo-icon><span>Sheet 1 of 5</span></div>
      <div class="f sep" style="padding-left:7px">Selected: 1 row, 13 columns</div>
      <div class="f" style="padding-left:6px">PageStyle_Devis</div>
      <div class="rest">
        <div class="sep">English (USA)</div>
        <div class="sep" style="padding-left:53px;gap:5px"><svg width="17" height="10" viewBox="0 0 17 10"><rect x=".5" y="1.500" width="10" height="7" fill="#eaf3fb" stroke="#5b9bd5"/><path d="M13 .5h3M13 9.500h3M14.500 .5v9" stroke="#555"/></svg></div>
        <div class="sep"></div><div class="sep"></div>
        <div class="sep" style="padding-left:64px">Average: ; Sum: 0</div>
        <div style="padding-left:5px;font-size:12px;color:#333">−<span class="ln"></span>+</div>
        <div style="margin-left:-1px;font-size:8.500px">100%</div>
      </div>`;
  }
}

customElements.define('lo-icon', LoIcon);
customElements.define('lo-combo', LoCombo);
customElements.define('lo-toolbar', LoToolbar);
customElements.define('lo-menubar', LoMenubar);
customElements.define('lo-formulabar', LoFormulabar);
customElements.define('lo-tabbar', LoTabbar);
customElements.define('lo-sheet', LoSheet);
customElements.define('lo-sidebar', LoSidebar);
customElements.define('lo-statusbar', LoStatusbar);
customElements.define('lo-workspace', LoWorkspace);
customElements.define('lo-app', LoApp);
</script>
</body>
</html>
